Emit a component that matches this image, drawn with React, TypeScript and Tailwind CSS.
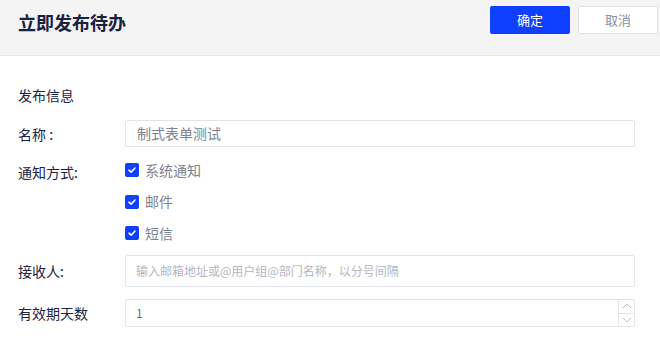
import React from "react";

const Check = () => (
  <span className="flex h-[14px] w-[14px] items-center justify-center rounded-[2px] bg-[#1040ff]">
    <svg width="10" height="10" viewBox="0 0 10 10" fill="none">
      <path d="M2 5.2 L4.1 7.2 L8 3" stroke="white" strokeWidth="1.6" strokeLinecap="round" strokeLinejoin="round" />
    </svg>
  </span>
);

export default function App() {
  const font = { fontFamily: '"Noto Sans CJK SC", "Noto Sans", sans-serif' };
  return (
    <div className="h-[342px] w-[660px] bg-white" style={font}>
      <div className="flex h-[56px] items-center justify-between border-b border-[#e8e8e8] bg-[#f4f4f4] pl-[18px] pr-[2px]">
        <div className="mb-[12px] text-[18px] font-bold leading-[24px] text-[#1b2240]">立即发布待办</div>
        <div className="mb-[16px] flex gap-[8px]">
          <button className="h-[28px] w-[80px] rounded-[2px] bg-[#1040ff] text-[13px] text-white">确定</button>
          <button className="h-[28px] w-[80px] rounded-[2px] border border-[#e2e2e6] bg-white text-[13px] text-[#8a8f9c]">取消</button>
        </div>
      </div>
      <div className="pl-[18px] pr-[25px]">
        <div className="mt-[29px] text-[14px] leading-[20px] text-[#1b2240]">发布信息</div>
        <div className="mt-[15px] flex items-center">
          <div className="w-[107px] text-[14px] leading-[20px] text-[#1b2240]">名称 :</div>
          <div className="flex h-[27px] flex-1 items-center rounded-[2px] border border-[#e4e4ec] px-[11px] text-[14px] text-[#7d8292]">制式表单测试</div>
        </div>
        <div className="mt-[13px] flex">
          <div className="w-[107px] pt-[2px] text-[14px] leading-[20px] text-[#1b2240]">通知方式:</div>
          <div className="flex flex-col gap-[11.5px]">
            {["系统通知", "邮件", "短信"].map((t) => (
              <div key={t} className="flex h-[20px] items-center gap-[6px] text-[14px] text-[#7d8292]">
                <Check />
                <span>{t}</span>
              </div>
            ))}
          </div>
        </div>
        <div className="mt-[12px] flex items-center">
          <div className="w-[107px] text-[14px] leading-[20px] text-[#1b2240]">接收人:</div>
          <div className="flex h-[32px] flex-1 items-center rounded-[2px] border border-[#e4e4ec] px-[10px] text-[12px] text-[#b4b7c0]">输入邮箱地址或@用户组@部门名称，以分号间隔</div>
        </div>
        <div className="mt-[12px] flex items-center">
          <div className="w-[107px] text-[14px] leading-[20px] text-[#1b2240]">有效期天数</div>
          <div className="flex h-[28px] flex-1 items-stretch rounded-[2px] border border-[#e4e4ec]">
            <div className="flex flex-1 items-center px-[10px] text-[12px] text-[#6b7080]">1</div>
            <div className="flex w-[16px] flex-col border-l border-[#e4e4ec]">
              <div className="flex flex-1 items-center justify-center border-b border-[#e4e4ec]">
                <svg width="10" height="6" viewBox="0 0 10 6" fill="none"><path d="M1 5 L5 1 L9 5" stroke="#b8bcc6" strokeWidth="1" /></svg>
              </div>
              <div className="flex flex-1 items-center justify-center">
                <svg width="10" height="6" viewBox="0 0 10 6" fill="none"><path d="M1 1 L5 5 L9 1" stroke="#b8bcc6" strokeWidth="1" /></svg>
              </div>
            </div>
          </div>
        </div>
      </div>
    </div>
  );
}
